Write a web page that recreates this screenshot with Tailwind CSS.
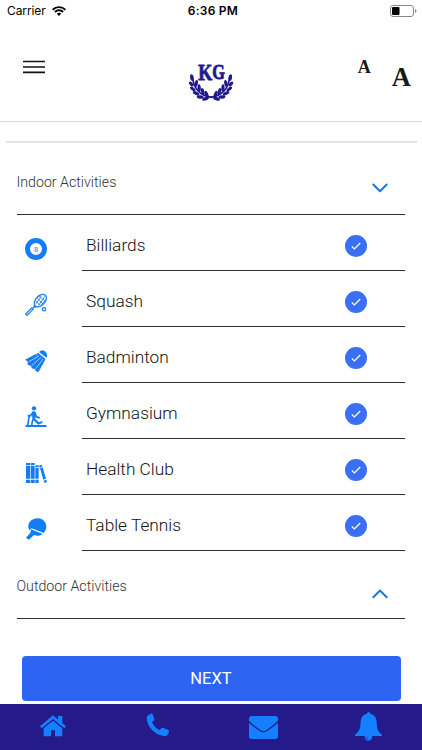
<!DOCTYPE html>
<html lang="en">

<head>
  <meta charset="UTF-8" />
  <meta name="viewport" content="width=device-width, initial-scale=1.0" />
  <title>Club Activities</title>
  <script src="https://cdn.jsdelivr.net/npm/@tailwindcss/browser@4"></script>
</head>

<body class="flex flex-col h-[750px] overflow-hidden bg-white text-black font-['Roboto',sans-serif]">
  <!-- Status bar -->
  <div class="grid grid-cols-3 items-center h-[22px] shrink-0 pl-[7px] pr-[5px] font-['Inter',sans-serif] text-[12px]">
    <div class="flex items-center gap-[6px]">
      <span class="text-[12px] tracking-[-0.1px]">Carrier</span>
      <svg class="w-[14px] h-[10px]" viewBox="0 0 14 10" fill="none" stroke="#000" stroke-width="1.9">
        <path d="M.7 3.7a9 9 0 0 1 12.6 0M2.9 6a5.8 5.8 0 0 1 8.2 0" />
        <path d="M7 10 4.8 7.7a3.2 3.2 0 0 1 4.4 0z" fill="#000" stroke="none" />
      </svg>
    </div>
    <span class="pl-[2px] text-center font-semibold tracking-[0.25px]">6:36 PM</span>
    <svg class="justify-self-end w-[27px] h-[12px]" viewBox="0 0 27 12">
      <rect x=".5" y=".5" width="23" height="11" rx="2.5" fill="none" stroke="#888" />
      <rect x="2" y="2" width="7.5" height="8" rx="1" fill="#000" />
      <path d="M25 4v4q1.5-.6 1.5-2T25 4z" fill="#888" />
    </svg>
  </div>

  <!-- Header -->
  <header class="grid grid-cols-3 h-[100px] shrink-0 pl-[11px] pr-[11px] border-b border-[#dcdcdc]">
    <button class="self-start mt-[38px] ml-[12px]">
      <svg class="w-[22px] h-[14px]" viewBox="0 0 22 14" stroke="#111" stroke-width="1.6">
        <path d="M0 1.500h22M0 7h22M0 12.400h22" />
      </svg>
    </button>
    <svg class="justify-self-center w-[64px] h-[64px] mt-[22px]" viewBox="0 0 192 192" fill="#21198a">
      <g font-family="Liberation Serif" font-weight="bold" stroke="#21198a" stroke-width="2.5">
        <text x="58" y="109" font-size="67" textLength="42" lengthAdjust="spacingAndGlyphs">K</text>
        <text x="100" y="106" font-size="62" textLength="38" lengthAdjust="spacingAndGlyphs">G</text>
      </g>
      <g transform="translate(5 4) scale(.96 1)">
        <g id="branch">
          <path d="M37 94C39 128 61 153 98 156" fill="none" stroke="#21198a" stroke-width="5" />
          <ellipse cx="35" cy="97" rx="5.5" ry="10" transform="rotate(-8 35 97)" />
          <ellipse cx="33" cy="116" rx="5" ry="9" transform="rotate(-48 33 116)" />
          <ellipse cx="38" cy="131" rx="5" ry="10" transform="rotate(-55 38 131)" />
          <ellipse cx="48" cy="144" rx="5" ry="11" transform="rotate(-65 48 144)" />
          <ellipse cx="61" cy="155" rx="5" ry="11" transform="rotate(-85 61 155)" />
          <ellipse cx="78" cy="160" rx="5" ry="11" transform="rotate(-110 78 160)" />
          <ellipse cx="49" cy="114" rx="5" ry="10" transform="rotate(8 49 114)" />
          <ellipse cx="58" cy="128" rx="5" ry="11" transform="rotate(-4 58 128)" />
          <ellipse cx="69" cy="139" rx="5" ry="11" transform="rotate(-14 69 139)" />
          <ellipse cx="81" cy="147" rx="5" ry="11" transform="rotate(-22 81 147)" />
        </g>
        <use href="#branch" transform="matrix(-1 0 0 1 190 0)" />
      </g>
    </svg>
    <div class="flex justify-end gap-[21px] font-['Liberation_Serif',serif] font-bold text-[#181818]">
      <button class="self-start mt-[34px] text-[18px] leading-[22px]">A</button>
      <button class="self-start mt-[39px] text-[26.5px] leading-[32px]">A</button>
    </div>
  </header>

  <main class="flex flex-col grow">
    <div class="h-[21px] mx-[5.5px] shrink-0 border-b-2 border-[#e2e2e2]"></div>

    <section class="ml-[16.5px] mr-[17px] mt-[-1px]">
      <div class="flex justify-between h-[73px] pr-[17px] border-b border-[#333]">
        <h2 class="pt-[30px] text-[14.2px] leading-[20px] font-light text-[#333]">Indoor Activities</h2>
        <svg class="w-[16px] h-[10px] mt-[41px]" viewBox="0 0 16 10" fill="none" stroke="#1877dd" stroke-width="2"
          stroke-linecap="round" stroke-linejoin="round">
          <path d="M1.300 1.500 8 8.200l6.700-6.700" />
        </svg>
      </div>
      <ul id="activityList"></ul>
    </section>

    <section class="ml-[16.5px] mr-[17px]">
      <div class="flex justify-between h-[68px] pr-[17px] border-b border-[#333]">
        <h2 class="pt-[25px] text-[14.2px] leading-[20px] font-light text-[#333]">Outdoor Activities</h2>
        <svg class="w-[16px] h-[10px] mt-[37.5px]" viewBox="0 0 16 10" fill="none" stroke="#1877dd" stroke-width="2"
          stroke-linecap="round" stroke-linejoin="round">
          <path d="M1.300 8.200 8 1.500l6.700 6.700" />
        </svg>
      </div>
    </section>

    <button class="h-[45px] mt-[36.5px] mx-[21.5px] pt-[2px] rounded-[4px] bg-[#2d65f2] text-white text-[16.5px]">NEXT</button>
  </main>

  <!-- Bottom navigation -->
  <nav class="grid grid-cols-4 h-[46px] shrink-0 bg-[#241a8a] text-[#1480ff]">
    <a class="flex justify-center pt-[11px]">
      <svg class="w-[26px] h-[22px]" viewBox="0 0 78 66" fill="currentColor">
        <path d="M39 1 0 34l5 6 34-28 34 28 5-6-11-10V3H54v11z" />
        <path d="M39 17 11 40v21q0 3 3 3h19V46h12v18h19q3 0 3-3V40z" />
      </svg>
    </a>
    <a class="flex justify-center pt-[9px]">
      <svg class="w-[24px] h-[24px]" viewBox="0 0 72 72" fill="currentColor">
        <path d="M9 5 15 2q4-1 5 2l5 13q1 3-2 6l-5 4q6 16 23 25l5-6q2-3 6-1l14 5q4 2 3 5l-2 7q-2 6-9 7C30 69 3 42 2 15Q2 8 9 5z" />
      </svg>
    </a>
    <a class="flex justify-center pt-[12px]">
      <svg class="w-[29px] h-[23px]" viewBox="0 0 87 69" fill="currentColor">
        <path d="M8 0h71q8 0 8 8v6Q73 28 53 42q-9 7-19 0Q14 28 0 14V8q0-8 8-8z" />
        <path d="M0 21Q15 34 34 46q9 6 19 0 19-12 34-25v40q0 8-8 8H8q-8 0-8-8z" />
      </svg>
    </a>
    <a class="flex justify-center pt-[8px] pr-[1px]">
      <svg class="w-[27px] h-[29px]" viewBox="0 0 81 87" fill="currentColor">
        <path d="M36 5q0-5 5-5t5 5C59 8 64 17 65 29c1 19 2 28 14 37q3 3 1 6H1q-2-3 1-6c12-9 14-18 15-37C18 17 23 8 36 5z" />
        <path d="M29 71h23q-1 15-12 15T29 71z" />
        <path d="M33 74q1 8 7 8" fill="none" stroke="#241a8a" stroke-width="2" />
      </svg>
    </a>
  </nav>

  <script>
    const activities = [
      {
        name: "Billiards",
        icon: `<circle cx="33" cy="33" r="25.5" fill="none" stroke="currentColor" stroke-width="15" />
          <text x="33" y="41" font-size="22" text-anchor="middle" font-family="Roboto">8</text>`
      },
      {
        name: "Squash",
        icon: `<g fill="none" stroke="currentColor" stroke-width="3.6">
            <ellipse cx="46" cy="20" rx="14" ry="22" transform="rotate(43 46 20)" />
            <path d="M29 29c1 8-2 10-6 14M36 38c-7 0-9 2-13 5" />
            <path d="M20 42 2 60l4 4 18-18z" />
            <circle cx="57" cy="46" r="5" />
          </g>
          <path d="M37 13 54 30M43 7 61 22M31 20 46 35M40 35 60 7M33 29 49 6M48 33 63 17" fill="none" stroke="currentColor" stroke-width="2.6" />`
      },
      {
        name: "Badminton",
        icon: `<path d="M42 6Q50-4 60 4q10 9 4 19z" />
          <path d="M39 8 62 27 56 33 34 13z" />
          <path d="M32 12 41 19 10 36 0 29z" />
          <path d="M41 18 48 23 20 49 8 44V36z" />
          <path d="M47 22 54 28 31 58 20 55 18 46z" />
          <path d="M52 27 60 31 40 67 31 62V53z" />
          <path d="M41 18 12 35M48 22 20 47M54 27 32 56" fill="none" stroke="#fff" stroke-width="1.800" />`
      },
      {
        name: "Gymnasium",
        icon: `<circle cx="27" cy="7" r="6.500" />
          <path d="M21 17q9-4 12 3l3 10 9 3-1 5-12-3-2-4 1 8 11 10 9-4 2 5-13 6-15-13q-5-10-4-26z" />
          <path d="M25 18 16 29M8 29h12M13 29 8 58M24 38l-4 19" fill="none" stroke="currentColor" stroke-width="5" />
          <path d="M3 57h60q2 0 2 3t-2 3H3q-2 0-2-3t2-3z" />`
      },
      {
        name: "Health Club",
        icon: `<path d="M3 3h12v7H3zM3 12h12v38H3zM3 53h12v10H3z" />
          <path d="M17 3h12v7H17zM17 12h12v38H17zM17 53h12v10H17z" />
          <path d="M31 10h10v6H31zM31 18h10v32H31zM31 53h10v10H31z" />
          <path d="M42 11 50 8 52 14 44 17zM45 19 53 16 63 50 55 53zM56 56 64 53 66 60 58 63z" />`
      },
      {
        name: "Table Tennis",
        icon: `<path d="M13 37C3 17 19 1 38 1c16 0 27 12 26 27-1 8-4 13-8 17L20 31z" />
          <path d="M18 34 53 48c-9 7-18 6-26 3L12 65 3 59 16 44z" />`
      }
    ];

    const activityList = document.getElementById("activityList");

    activityList.innerHTML = activities.map((activity) => `
      <li class="flex h-[56px]">
        <svg class="w-[22px] h-[22px] mt-[23px] ml-[8.5px] text-[#147cf5] overflow-visible" viewBox="0 0 66 66" fill="currentColor">${activity.icon}</svg>
        <div class="flex justify-between grow ml-[34.5px] pl-[4.5px] pr-[38px] border-b border-[#333]">
          <span class="pt-[18px] text-[17.3px] leading-[24px] font-light text-[#111]">${activity.name}</span>
          <span class="flex items-center justify-center size-[22px] mt-[20px] rounded-full bg-[#3a70f8]">
            <svg class="w-[10px] h-[8px]" viewBox="0 0 10 8" fill="none" stroke="#fff" stroke-width="1.200">
              <path d="M.8 4.500 3.400 7 9.200 1" />
            </svg>
          </span>
        </div>
      </li>`).join("");
  </script>
</body>

</html>
